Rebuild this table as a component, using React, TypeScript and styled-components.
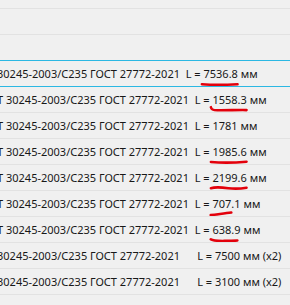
import React from 'react';
import styled, { createGlobalStyle } from 'styled-components';

const GlobalStyle = createGlobalStyle`
  html, body {
    margin: 0;
    padding: 0;
    background: #f0f0f0;
  }
`;

const Viewport = styled.div`
  width: 290px;
  height: 305px;
  overflow: hidden;
  background: #f0f0f0;
  font-family: "Noto Sans", "Open Sans", sans-serif;
  font-size: 11px;
  color: #181818;
`;

// list is scrolled a bit, so the first row is only partly visible
const List = styled.div`
  margin-top: -17px;
  display: flex;
  flex-direction: column;
`;

const Row = styled.div<{ $edge?: boolean }>`
  height: 25px;
  flex: none;
  display: flex;
  align-items: center;
  border-bottom: 1px solid ${({ $edge }) => ($edge ? '#2bb8e3' : '#e2e2e2')};
  white-space: pre;
  overflow: hidden;
`;

const Line = styled.span<{ $shift: number }>`
  margin-left: ${({ $shift }) => $shift}px;
`;

const Value = styled.span`
  position: relative;
`;

const Mark = styled.svg`
  position: absolute;
  left: -2px;
  top: 14px;
  width: calc(100% + 3px);
  height: 7px;
  overflow: visible;
  pointer-events: none;
`;

type Item = {
  shift: number;
  head: string;
  value: string;
  tail: string;
  mark?: string;
  edge?: boolean;
};

const NAME = '30245-2003/С235 ГОСТ 27772-2021  L = ';
const NAME_WIDE = '30245-2003/С235 ГОСТ 27772-2021      L = ';

const items: Item[] = [
  { shift: -3, head: NAME, value: '7536.8', tail: ' мм', mark: 'M1 3.6 C10 4.2 26 4.3 40 3.6', edge: true },
  { shift: -3, head: 'Т ' + NAME, value: '1558.3', tail: ' мм', mark: 'M1 1 C1.5 3 3 3.6 8 3.6 C18 3.7 30 3.4 40 3.5' },
  { shift: -3, head: 'Т ' + NAME, value: '1781', tail: ' мм' },
  { shift: -3, head: 'Т ' + NAME, value: '1985.6', tail: ' мм', mark: 'M1 3.4 C12 4.2 28 4 40 3.2' },
  { shift: -3, head: 'Т ' + NAME, value: '2199.6', tail: ' мм', mark: 'M1 3.6 C6 2.4 12 2.8 20 3.6 C28 4.4 34 4 40 3.2' },
  { shift: -3, head: 'Т ' + NAME, value: '707.1', tail: ' мм', mark: 'M1 4.4 C10 3.6 20 3 28 2.2' },
  { shift: -3, head: 'Т ' + NAME, value: '638.9', tail: ' мм', mark: 'M1 2.8 C4 4.4 10 4.3 20 4.2 C28 4.2 32 4 36 3.8' },
  { shift: -3, head: NAME_WIDE, value: '7500', tail: ' мм (x2)' },
  { shift: -3, head: NAME_WIDE, value: '3100', tail: ' мм (x2)' },
];

const Underline: React.FC<{ d: string }> = ({ d }) => (
  <Mark viewBox="0 0 41 6" preserveAspectRatio="none">
    <path d={d} fill="none" stroke="#e3000b" strokeWidth={2.6} strokeLinecap="round" vectorEffect="non-scaling-stroke" />
  </Mark>
);

const App: React.FC = () => (
  <Viewport>
    <GlobalStyle />
    <List>
      <Row />
      <Row />
      <Row $edge />
      {items.map((it, i) => (
        <Row key={i} $edge={it.edge}>
          <Line $shift={it.shift}>
            {it.head}
            <Value>
              {it.value}
              {it.mark && <Underline d={it.mark} />}
            </Value>
            {it.tail}
          </Line>
        </Row>
      ))}
      <Row />
    </List>
  </Viewport>
);

export default App;
